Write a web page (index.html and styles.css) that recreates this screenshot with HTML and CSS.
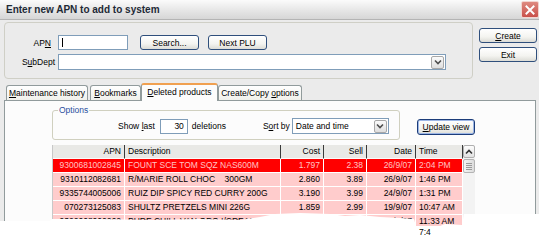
FILE: index.html
```
<html lang="en">
  <head>
    <meta charset="UTF-8" />
    <title>Enter new APN to add to system</title>
    <link rel="stylesheet" href="styles.css">
  </head>
  <body>
    <div class="window">
      <div class="titlebar">
        <span class="title">Enter new APN to add to system</span>
        <span class="close">
          <svg width="17" height="16" viewBox="0 0 17 16">
            <path d="M4 3.5 L13 12.5 M13 3.5 L4 12.5" stroke="#fff" stroke-width="2" fill="none" />
          </svg>
        </span>
      </div>

      <div class="top">
        <div class="group">
          <div class="row">
            <span class="lbl apn-lbl">AP<u>N</u></span>
            <div class="field apn"><span class="caret"></span></div>
            <button class="btn search">Search...</button>
            <button class="btn plu">Next PLU</button>
          </div>
          <div class="row">
            <span class="lbl">S<u>u</u>bDept</span>
            <div class="combo subdept">
              <span class="val"></span>
              <span class="arrow">
                <svg width="8" height="6" viewBox="0 0 8 6"><path d="M1 1.5 L4 4.5 L7 1.5" stroke="#4d4d4d" stroke-width="1.6" fill="none" /></svg>
              </span>
            </div>
          </div>
        </div>
        <div class="side">
          <button class="btn side-btn"><span><u>C</u>reate</span></button>
          <button class="btn side-btn">Exit</button>
        </div>
      </div>

      <div class="tabs">
        <div class="tab t-maint"><span><u>M</u>aintenance history</span></div>
        <div class="tab t-book"><span><u>B</u>ookmarks</span></div>
        <div class="tab t-del active"><span><u>D</u>eleted products</span></div>
        <div class="tab t-copy"><span>Create/Copy <u>o</u>ptions</span></div>
      </div>

      <div class="panel">
        <div class="opts-row">
          <fieldset class="options">
            <legend>Options</legend>
            <span class="txt">Show <u>l</u>ast</span>
            <div class="field count">30</div>
            <span class="txt deletions">deletions</span>
            <span class="txt sortby">S<u>o</u>rt by</span>
            <div class="combo sort">
              <span class="val">Date and time</span>
              <span class="arrow">
                <svg width="8" height="6" viewBox="0 0 8 6"><path d="M1 1.5 L4 4.5 L7 1.5" stroke="#4d4d4d" stroke-width="1.6" fill="none" /></svg>
              </span>
            </div>
          </fieldset>
          <button class="btn update"><span><u>U</u>pdate view</span></button>
        </div>

        <div class="list">
          <div class="rows">
            <div class="tr head">
              <div class="r">APN</div>
              <div>Description</div>
              <div class="r">Cost</div>
              <div class="r">Sell</div>
              <div class="r">Date</div>
              <div>Time</div>
            </div>
            <div class="tr sel">
              <div class="r">9300681002845</div>
              <div>FOUNT SCE TOM SQZ NAS600M</div>
              <div class="r">1.797</div>
              <div class="r">2.38</div>
              <div class="r">26/9/07</div>
              <div>2:04 PM</div>
            </div>
            <div class="tr">
              <div class="r">9310112082681</div>
              <div>R/MARIE ROLL CHOC &nbsp;&nbsp;&nbsp;300GM</div>
              <div class="r">2.860</div>
              <div class="r">3.89</div>
              <div class="r">26/9/07</div>
              <div>1:46 PM</div>
            </div>
            <div class="tr">
              <div class="r">9335744005006</div>
              <div>RUIZ DIP SPICY RED CURRY 200G</div>
              <div class="r">3.190</div>
              <div class="r">3.99</div>
              <div class="r">24/9/07</div>
              <div>1:31 PM</div>
            </div>
            <div class="tr">
              <div class="r">070273125083</div>
              <div>SHULTZ PRETZELS MINI 226G</div>
              <div class="r">1.859</div>
              <div class="r">2.99</div>
              <div class="r">19/9/07</div>
              <div>10:47 AM</div>
            </div>
            <div class="tr">
              <div class="r">9322008000262</div>
              <div>PURE CHILL VAN ORG I/CREAM</div>
              <div class="r">5.140</div>
              <div class="r">6.99</div>
              <div class="r">17/9/07</div>
              <div>11:33 AM</div>
            </div>
          </div>
          <div class="scroll">
            <div class="sb-btn">
              <svg width="8" height="6" viewBox="0 0 8 6"><path d="M1 4.5 L4 1.5 L7 4.5" stroke="#333" stroke-width="1.6" fill="none" /></svg>
            </div>
            <div class="sb-thumb"><span></span><span></span><span></span><span></span></div>
            <div class="sb-track"></div>
          </div>
        </div>
      </div>
    </div>

    <div class="tear">
      <svg width="539" height="241" viewBox="0 0 539 241">
        <polygon fill="#fff" points="0,221 50,221 52,219 100,219 150,220 200,219 240,220 260,217 275,214 300,213 330,214 345,216 360,215 380,217 400,218 414,219 416,226 440,226 445,224 462,225 464,214 539,214 539,241 0,241" />
      </svg>
      <span class="frag">7:4</span>
    </div>
  </body>
</html>
```

FILE: styles.css
```
* {
  box-sizing: border-box;
}
body {
  margin: 0;
  width: 539px;
  height: 241px;
  overflow: hidden;
  position: relative;
  background: #ebebeb;
  font-family: "Liberation Sans", Arial, sans-serif;
  font-size: 8.5px;
  color: #000;
}
button {
  font-family: inherit;
  font-size: inherit;
  color: #000;
  padding: 0;
}
.window {
  height: 241px;
  display: flex;
  flex-direction: column;
}

/* title */
.titlebar {
  height: 20px;
  display: flex;
  align-items: center;
  justify-content: space-between;
  padding-left: 6px;
  background: linear-gradient(#fbfbfb, #e4e4e4 60%, #d6d6d6);
  border-bottom: 1px solid #b4b4b4;
}
.title {
  font-size: 10px;
  font-weight: bold;
  color: #1e2a36;
}
.close {
  width: 18px;
  height: 17px;
  align-self: flex-start;
  margin-top: 1px;
  display: flex;
  align-items: center;
  justify-content: center;
  background: linear-gradient(#de8a80, #c9504a);
  border: 1px solid #f3d4cf;
  border-radius: 2px;
}

/* top area */
.top {
  display: flex;
  padding: 2px 0 0 4px;
}
.group {
  width: 469px;
  height: 57px;
  border: 1px solid #cfcfc6;
  border-radius: 4px;
  padding-top: 12px;
  display: flex;
  flex-direction: column;
  gap: 4px;
}
.row {
  display: flex;
  align-items: center;
}
.lbl {
  width: 50px;
  text-align: right;
  margin-right: 3px;
}
.apn-lbl {
  padding-right: 4px;
}
.field {
  height: 15px;
  background: #fff;
  border: 1px solid #7f9db9;
}
.apn {
  width: 70px;
  display: flex;
  align-items: center;
  padding-left: 3px;
}
.caret {
  width: 1px;
  height: 9px;
  background: #000;
}
.btn {
  height: 15px;
  display: flex;
  align-items: center;
  justify-content: center;
  background: linear-gradient(#ffffff, #f4f4f0 60%, #dcdcd6);
  border: 1px solid #2f4f7c;
  border-radius: 3px;
}
.search {
  width: 59px;
  margin-left: 12px;
}
.plu {
  width: 59px;
  margin-left: 9px;
}
.combo {
  height: 16px;
  display: flex;
  align-items: center;
  justify-content: space-between;
  background: #fff;
  border: 1px solid #7f9db9;
  padding: 1px 1px 1px 3px;
}
.subdept {
  width: 388px;
}
.arrow {
  width: 13px;
  height: 13px;
  display: flex;
  align-items: center;
  justify-content: center;
  background: linear-gradient(#fbfbfb, #dedede);
  border: 1px solid #a8a8a8;
  border-radius: 2px;
}
.side {
  display: flex;
  flex-direction: column;
  gap: 4px;
  margin-left: 6px;
  padding-top: 6px;
}
.side-btn {
  width: 58px;
}

/* tabs */
.tabs {
  display: flex;
  align-items: flex-end;
  height: 19px;
  padding-left: 6px;
  margin-top: 2px;
  position: relative;
  z-index: 2;
}
.tab {
  height: 15px;
  display: flex;
  align-items: center;
  justify-content: center;
  white-space: nowrap;
  background: linear-gradient(#ffffff, #f0f0ea);
  border: 1px solid #919b9c;
  border-bottom: none;
  border-radius: 3px 3px 0 0;
}
.t-maint {
  width: 82px;
}
.t-book {
  width: 51px;
  margin-left: 2px;
}
.t-del {
  width: 77px;
}
.t-copy {
  width: 84px;
}
.tab.active {
  height: 18px;
  margin-bottom: -1px;
  background: #fcfcfc;
  border-top: 2px solid #f0a050;
  padding-bottom: 2px;
}

/* panel */
.panel {
  flex: 1;
  margin: 0 3px 0 4px;
  background: #fcfcfc;
  border: 1px solid #919b9c;
  padding-top: 4px;
  padding-left: 47px;
}
.opts-row {
  display: flex;
  align-items: flex-end;
}
.options {
  width: 348px;
  height: 35px;
  margin: 0;
  padding: 3px 8px 5px 65px;
  border: 1px solid #d0d0bf;
  border-radius: 3px;
  display: flex;
  align-items: center;
}
.options legend {
  padding: 0 1px;
  margin-left: -60px;
  color: #2a4f9e;
  line-height: 10px;
}
.txt {
  white-space: nowrap;
}
.count {
  width: 28px;
  margin-left: 5px;
  text-align: right;
  padding-right: 3px;
  line-height: 13px;
}
.deletions {
  margin-left: 4px;
}
.sortby {
  margin-left: 37px;
}
.sort {
  width: 97px;
  margin-left: 2px;
}
.update {
  width: 58px;
  height: 16px;
  margin-left: 17px;
  margin-bottom: 5px;
  border: 1px solid #1c3d7a;
  box-shadow: inset 0 0 0 1px #9cb6e6;
}

/* list */
.list {
  display: flex;
  width: 423px;
  margin-top: 5px;
  border-left: 1px solid #c8c8c8;
}
.rows {
  width: 410px;
}
.tr {
  display: grid;
  grid-template-columns: 72px 156px 43px 43px 49px 47px;
  height: 14px;
  background: #ffcccc;
}
.tr div {
  border-right: 1px solid #fff;
  border-bottom: 1px solid #fff;
  padding: 0 3px;
  line-height: 13px;
  white-space: nowrap;
  overflow: hidden;
}
.tr .r {
  text-align: right;
}
.tr.head {
  background: #e9e9e6;
}
.tr.head div {
  border-right: 1px solid #3a3a3a;
  border-bottom: 1px solid #fbfbfb;
}
.tr.sel {
  background: #ff0000;
  color: #ffc4c4;
}
.scroll {
  width: 13px;
  display: flex;
  flex-direction: column;
  background: #f3f3f3;
}
.sb-btn {
  height: 13px;
  display: flex;
  align-items: center;
  justify-content: center;
  background: linear-gradient(#fdfdfd, #e2e2e2);
  border: 1px solid #b0b0b0;
  border-radius: 2px;
}
.sb-thumb {
  height: 14px;
  margin-top: 1px;
  display: flex;
  flex-direction: column;
  align-items: center;
  justify-content: center;
  gap: 1px;
  background: linear-gradient(90deg, #f4f4f4, #dcdcdc);
  border: 1px solid #b4b4b4;
  border-radius: 2px;
}
.sb-thumb span {
  width: 6px;
  height: 1px;
  background: #9a9a9a;
}
.sb-track {
  flex: 1;
}

/* torn edge of the screenshot */
.tear {
  position: absolute;
  left: 0;
  top: 0;
  width: 539px;
  height: 241px;
  pointer-events: none;
}
.tear svg {
  display: block;
}
.frag {
  position: absolute;
  left: 419px;
  top: 227px;
  line-height: 10px;
}
```
